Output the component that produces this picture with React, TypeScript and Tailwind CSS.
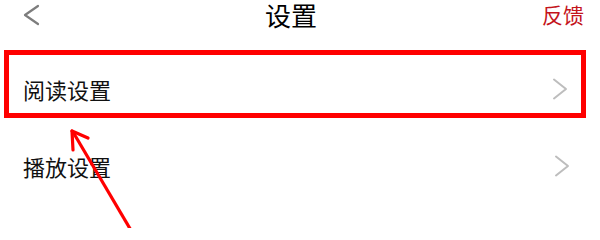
import React from 'react';

const font = { fontFamily: '"Noto Sans CJK SC", "Noto Sans", sans-serif' };

function RowChevron() {
  return (
    <svg width="16" height="22" viewBox="0 0 16 22" className="shrink-0">
      <polyline points="2,1.5 14,11 2,20.5" fill="none" stroke="#bdbdbd" strokeWidth="2" strokeLinecap="round" strokeLinejoin="round" />
    </svg>
  );
}

export default function App() {
  return (
    <div className="relative w-[600px] h-[228px] overflow-hidden bg-white text-[#111]" style={font}>
      {/* Header */}
      <div className="flex h-[29px] items-center justify-between pl-[23px] pr-[16px]">
        <svg width="17" height="22" viewBox="0 0 17 22">
          <polyline points="15,2 2,11 15,20" fill="none" stroke="#7d7d7d" strokeWidth="2.2" strokeLinecap="round" strokeLinejoin="round" />
        </svg>
        <h1 className="text-[26px] leading-[29px] font-normal text-black">设置</h1>
        <span className="text-[21px] leading-[29px] text-[#c4141c]">反馈</span>
      </div>

      {/* Rows */}
      <div className="mt-[21px] ml-[4px] w-[582px] h-[68px] border-[5px] border-[#ff0000]">
        <div className="flex h-full items-center justify-between pt-[10px] pl-[14px] pr-[13px]">
          <span className="text-[22px] leading-none">阅读设置</span>
          <RowChevron />
        </div>
      </div>
      <div className="flex h-[90px] items-center justify-between pt-[6px] pl-[23px] pr-[30px]">
        <span className="text-[22px] leading-none">播放设置</span>
        <RowChevron />
      </div>

      {/* Annotation arrow */}
      <svg className="pointer-events-none absolute left-0 top-0" width="600" height="228" viewBox="0 0 600 228">
        <line x1="132" y1="232" x2="73" y2="132" stroke="#ff0000" strokeWidth="3.2" />
        <line x1="72" y1="131" x2="88" y2="138" stroke="#ff0000" strokeWidth="3.2" strokeLinecap="round" />
        <line x1="72" y1="131" x2="73" y2="150" stroke="#ff0000" strokeWidth="3.2" strokeLinecap="round" />
      </svg>
    </div>
  );
}
